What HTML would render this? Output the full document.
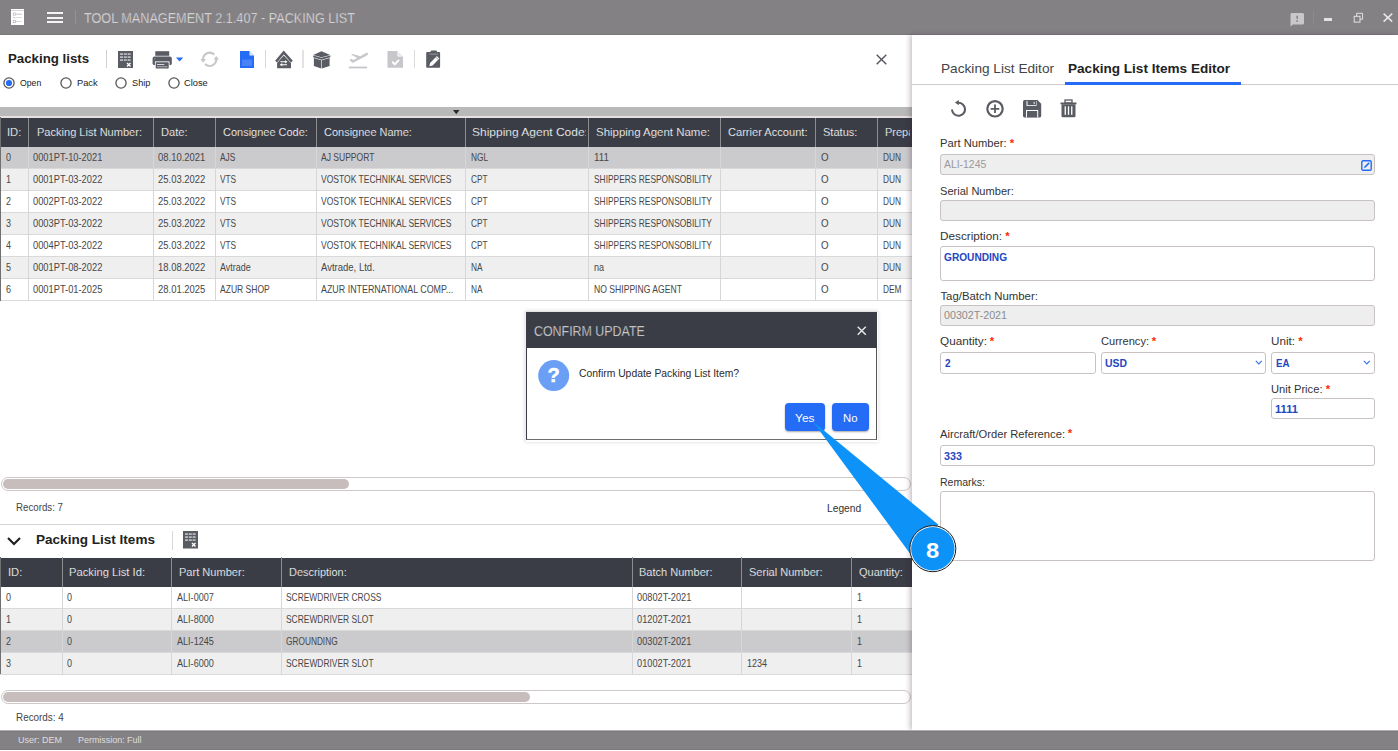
<!DOCTYPE html>
<html><head><meta charset="utf-8">
<style>
*{margin:0;padding:0;box-sizing:border-box}
html,body{width:1398px;height:751px;overflow:hidden;background:#fff;font-family:"Liberation Sans",sans-serif;position:relative}
.a{position:absolute;white-space:nowrap}
svg.a{overflow:visible}
</style></head><body>
<div class="a" style="left:0px;top:0px;width:1398px;height:35px;background:#848185;"></div>
<div class="a" style="left:0px;top:34px;width:1398px;height:1px;background:#7a777b;"></div>
<svg class="a" style="left:11px;top:9px" width="14" height="17" viewBox="0 0 14 17"><rect x="0" y="0" width="13" height="16" fill="#fff"/><rect x="0" y="1.2" width="13" height="0.8" fill="#cfcfcf"/><rect x="2.2" y="4" width="2.2" height="2.2" fill="none" stroke="#aaa" stroke-width="0.6"/><rect x="5" y="4.8" width="6" height="0.7" fill="#aaa"/><rect x="2" y="8.3" width="2.5" height="0.8" fill="#bbb"/><rect x="5" y="8.3" width="6" height="0.7" fill="#ccc"/><rect x="2.2" y="11.5" width="2.2" height="2.2" fill="none" stroke="#aaa" stroke-width="0.6"/><rect x="5" y="12.3" width="6" height="0.7" fill="#ccc"/></svg>
<div class="a" style="left:47px;top:12px;width:16px;height:2px;background:#f4f4f4;"></div>
<div class="a" style="left:47px;top:16.5px;width:16px;height:2px;background:#f4f4f4;"></div>
<div class="a" style="left:47px;top:21px;width:16px;height:2px;background:#f4f4f4;"></div>
<div class="a" style="left:75px;top:10px;width:1px;height:14px;background:#959296;"></div>
<div class="a" style="left:84.00px;top:11.15px;font-size:14.2px;line-height:15.861px;color:#f2f2f2;transform:scaleX(0.8920);transform-origin:0 0;-webkit-text-stroke:0.45px #848185">TOOL MANAGEMENT 2.1.407 - PACKING LIST</div>
<svg class="a" style="left:1290px;top:13px" width="15" height="14" viewBox="0 0 15 14"><path d="M1.5 0 H12.5 Q14 0 14 1.5 V10 Q14 11.5 12.5 11.5 H3 L0.5 13.5 V1.5 Q0.5 0 1.5 0Z" fill="#c9c7ca"/><rect x="6.4" y="2.8" width="1.5" height="3" fill="#848185"/><rect x="6.4" y="7.2" width="1.5" height="1.6" fill="#848185"/></svg>
<div class="a" style="left:1313px;top:11px;width:1px;height:12px;background:#8f8c90;"></div>
<div class="a" style="left:1324px;top:18.2px;width:8px;height:2.6px;background:#e2e2e2;"></div>
<svg class="a" style="left:1353px;top:12px" width="11" height="11" viewBox="0 0 11 11"><rect x="1.2" y="4.3" width="5.8" height="5.8" fill="none" stroke="#e2e2e2" stroke-width="1"/><path d="M3.6 4.3 V1.3 H9.6 V7.2 H7" fill="none" stroke="#e2e2e2" stroke-width="1"/></svg>
<svg class="a" style="left:1383px;top:13px" width="10" height="9" viewBox="0 0 10 9"><path d="M0.6 0.6 L9.2 8.6 M9.2 0.6 L0.6 8.6" stroke="#e6e6e6" stroke-width="1.5"/></svg>
<div class="a" style="left:7.50px;top:52.05px;font-size:13.2px;line-height:14.744px;color:#222;font-weight:bold;transform:scaleX(1.0052);transform-origin:0 0;">Packing lists</div>
<div class="a" style="left:106px;top:50px;width:1px;height:18px;background:#d0d0d0;"></div>
<svg class="a" style="left:118px;top:51px" width="15" height="17" viewBox="0 0 15 17"><rect width="15" height="17" fill="#5a5c63"/><rect x="2.0" y="2.3" width="3" height="1.6" fill="#c3c4c9"/><rect x="2.0" y="5.3" width="3" height="1.6" fill="#c3c4c9"/><rect x="2.0" y="8.3" width="3" height="1.6" fill="#c3c4c9"/><rect x="5.8" y="2.3" width="3" height="1.6" fill="#c3c4c9"/><rect x="5.8" y="5.3" width="3" height="1.6" fill="#c3c4c9"/><rect x="5.8" y="8.3" width="3" height="1.6" fill="#c3c4c9"/><rect x="9.6" y="2.3" width="3" height="1.6" fill="#c3c4c9"/><rect x="9.6" y="5.3" width="3" height="1.6" fill="#c3c4c9"/><rect x="9.6" y="8.3" width="3" height="1.6" fill="#c3c4c9"/><path d="M9 12 L12.5 15.5 M12.5 12 L9 15.5" stroke="#fff" stroke-width="1.4"/></svg>
<svg class="a" style="left:152px;top:51px" width="21" height="18" viewBox="0 0 21 18"><rect x="3.3" y="0.2" width="13.9" height="4.6" fill="#5a5c63"/><rect x="0.6" y="5.6" width="19.2" height="8.6" rx="2" fill="#5a5c63"/><rect x="2.9" y="10.4" width="14.6" height="7.3" fill="#fff"/><rect x="3.7" y="11.2" width="13" height="6.2" rx="0.6" fill="#5a5c63"/><rect x="5" y="13.1" width="7.3" height="0.9" fill="#e6e6ea"/><rect x="5" y="15.3" width="10.4" height="0.9" fill="#b9bac0"/><rect x="2.3" y="7.3" width="1.3" height="1" fill="#9a9ba2"/></svg>
<svg class="a" style="left:176px;top:57px" width="8" height="5" viewBox="0 0 8 5"><path d="M0 0.5 H7.2 L3.6 4.5Z" fill="#246bf5"/></svg>
<svg class="a" style="left:200px;top:47px" width="20" height="25" viewBox="0 0 20 25"><path d="M14.37 7.63 A6.6 6.6 0 0 0 3.1 12.6" fill="none" stroke="#c6c6cb" stroke-width="2.1"/><path d="M5.03 16.97 A6.6 6.6 0 0 0 16.3 12" fill="none" stroke="#c6c6cb" stroke-width="2.1"/><path d="M0.4 12 L5.8 12 L3.1 15.7Z" fill="#c6c6cb"/><path d="M13.6 12.6 L19 12.6 L16.3 8.9Z" fill="#c6c6cb"/></svg>
<svg class="a" style="left:240px;top:51px" width="14" height="17" viewBox="0 0 14 17"><path d="M0 0 H9.5 L14 4.5 V17 H0Z" fill="#246bf5"/><path d="M9.5 0 V4.5 H14Z" fill="#fff" opacity="0.85"/><rect x="2" y="8.5" width="10" height="6.5" fill="#4a82f7"/></svg>
<div class="a" style="left:265px;top:50px;width:1px;height:18px;background:#d8d8d8;"></div>
<svg class="a" style="left:275px;top:50px" width="18" height="19" viewBox="0 0 18 19"><path d="M1.1 11.6 L8.7 2.4 L16.9 11.6" fill="none" stroke="#5a5c63" stroke-width="2.5" stroke-linejoin="miter"/><path d="M2.1 18.3 V12.9 L8.7 5.5 L16 12.9 V18.3Z" fill="#5a5c63"/><path d="M5.4 11.8 H11.2 M5.4 14.7 H12" stroke="#fff" stroke-width="1.1" fill="none"/><path d="M10.2 10.2 L12.4 11.8 L10.2 13.4Z M7.2 13.1 L5 14.7 L7.2 16.3Z" fill="#fff"/></svg>
<div class="a" style="left:302px;top:50px;width:1.5px;height:18px;background:#e2e2e2;"></div>
<svg class="a" style="left:313px;top:51px" width="18" height="18" viewBox="0 0 18 18"><path d="M0.2 4 L8.5 0.2 L17.3 4 L8.5 6.2Z" fill="#5a5c63"/><path d="M0.2 4.6 L8.5 6.8 L17.3 4.6 L17.3 6.3 L8.5 8.7 L0.2 6.3Z" fill="#5a5c63"/><path d="M0.9 7 L8.2 9.3 V17.4 L0.9 15Z M16.6 7 L8.8 9.3 V17.4 L16.6 15Z" fill="#5a5c63"/></svg>
<svg class="a" style="left:348px;top:51px" width="21" height="18" viewBox="0 0 21 18"><path d="M1.3 8.8 L3.2 7.9 L5.5 9 L9.3 7.1 L3 3.6 L4.8 3 L12.3 5.3 L17 2.6 Q19.8 1.1 20.3 2.2 Q20.6 3.4 18 4.9 L5.5 11.6 Q4.8 11.9 4.2 11.5 Z" fill="#c6c6cb"/><rect x="0.8" y="15.6" width="18.3" height="1.8" fill="#c6c6cb"/></svg>
<svg class="a" style="left:387px;top:51px" width="16" height="17" viewBox="0 0 16 17"><path d="M0.5 0 H10.5 L16 5.5 V16.8 H0.5Z" fill="#c6c6cb"/><path d="M10.8 0.6 V5.2 H15.4Z" fill="#e6e6ea" stroke="#fff" stroke-width="0.7"/><path d="M5.2 10.8 L7.8 13.3 L12 8.8" stroke="#fff" stroke-width="1.9" fill="none"/></svg>
<div class="a" style="left:414px;top:50px;width:1.2px;height:18px;background:#dcdcdc;"></div>
<svg class="a" style="left:426px;top:50px" width="15" height="19" viewBox="0 0 15 19"><rect x="0.2" y="2" width="13.9" height="15.8" rx="1" fill="#5a5c63"/><rect x="4.5" y="0.6" width="6.5" height="3.2" rx="1.3" fill="#5a5c63"/><rect x="3.6" y="3.7" width="8.3" height="0.8" fill="#a9aab0"/><path d="M3.3 16.3 L4.1 12.9 L10.9 6.1 L13.4 8.6 L6.6 15.4Z" fill="#fff"/><path d="M9.8 7.2 L12.3 9.7" stroke="#5a5c63" stroke-width="0.6"/></svg>
<svg class="a" style="left:876px;top:54.2px" width="11" height="11" viewBox="0 0 11 11"><path d="M0.7 0.7 L10.3 10.3 M10.3 0.7 L0.7 10.3" stroke="#52555b" stroke-width="1.4"/></svg>
<svg class="a" style="left:3.3000000000000007px;top:77px" width="12" height="12" viewBox="0 0 12 12"><circle cx="6" cy="6" r="5.1" fill="#fff" stroke="#555" stroke-width="1.3"/><circle cx="6" cy="6" r="3.1" fill="#246bf5"/></svg>
<div class="a" style="left:19.70px;top:77.81px;font-size:9.6px;line-height:10.723px;color:#222;transform:scaleX(0.9082);transform-origin:0 0;">Open</div>
<svg class="a" style="left:60px;top:77px" width="12" height="12" viewBox="0 0 12 12"><circle cx="6" cy="6" r="5.1" fill="#fff" stroke="#555" stroke-width="1.3"/></svg>
<div class="a" style="left:76.80px;top:77.81px;font-size:9.6px;line-height:10.723px;color:#222;transform:scaleX(0.9659);transform-origin:0 0;">Pack</div>
<svg class="a" style="left:115.3px;top:77px" width="12" height="12" viewBox="0 0 12 12"><circle cx="6" cy="6" r="5.1" fill="#fff" stroke="#555" stroke-width="1.3"/></svg>
<div class="a" style="left:131.60px;top:77.81px;font-size:9.6px;line-height:10.723px;color:#222;transform:scaleX(0.9590);transform-origin:0 0;">Ship</div>
<svg class="a" style="left:168px;top:77px" width="12" height="12" viewBox="0 0 12 12"><circle cx="6" cy="6" r="5.1" fill="#fff" stroke="#555" stroke-width="1.3"/></svg>
<div class="a" style="left:184.30px;top:77.81px;font-size:9.6px;line-height:10.723px;color:#222;transform:scaleX(0.9673);transform-origin:0 0;">Close</div>
<div class="a" style="left:0px;top:107px;width:912px;height:9px;background:#b9b9b9;"></div>
<div class="a" style="left:0px;top:116px;width:912px;height:2px;background:#e6e0e0;"></div>
<svg class="a" style="left:453px;top:110px" width="7" height="5" viewBox="0 0 7 5"><path d="M0 0 H6.5 L3.25 4.3Z" fill="#2b2b2b"/></svg>
<div class="a" style="left:0px;top:118px;width:912px;height:29px;background:#3a3d46;"></div>
<div class="a" style="left:0px;top:147.0px;width:912px;height:21.88px;background:#cbcacd;"></div>
<div class="a" style="left:0px;top:168.88px;width:912px;height:21.88px;background:#efefef;"></div>
<div class="a" style="left:0px;top:190.76px;width:912px;height:21.88px;background:#fff;"></div>
<div class="a" style="left:0px;top:212.64px;width:912px;height:21.88px;background:#efefef;"></div>
<div class="a" style="left:0px;top:234.51999999999998px;width:912px;height:21.88px;background:#fff;"></div>
<div class="a" style="left:0px;top:256.4px;width:912px;height:21.88px;background:#efefef;"></div>
<div class="a" style="left:0px;top:278.28px;width:912px;height:21.88px;background:#fff;"></div>
<div class="a" style="left:0px;top:168.38px;width:912px;height:1px;background:#d9d9d9;"></div>
<div class="a" style="left:0px;top:190.26px;width:912px;height:1px;background:#d9d9d9;"></div>
<div class="a" style="left:0px;top:212.14px;width:912px;height:1px;background:#d9d9d9;"></div>
<div class="a" style="left:0px;top:234.01999999999998px;width:912px;height:1px;background:#d9d9d9;"></div>
<div class="a" style="left:0px;top:255.89999999999998px;width:912px;height:1px;background:#d9d9d9;"></div>
<div class="a" style="left:0px;top:277.78px;width:912px;height:1px;background:#d9d9d9;"></div>
<div class="a" style="left:0px;top:299.65999999999997px;width:912px;height:1px;background:#d9d9d9;"></div>
<div class="a" style="left:28.0px;top:118px;width:1.2px;height:29px;background:#8e8e92;"></div>
<div class="a" style="left:28.0px;top:147px;width:1px;height:153.16px;background:#d6d6d6;"></div>
<div class="a" style="left:152.5px;top:118px;width:1.2px;height:29px;background:#8e8e92;"></div>
<div class="a" style="left:152.5px;top:147px;width:1px;height:153.16px;background:#d6d6d6;"></div>
<div class="a" style="left:215.0px;top:118px;width:1.2px;height:29px;background:#8e8e92;"></div>
<div class="a" style="left:215.0px;top:147px;width:1px;height:153.16px;background:#d6d6d6;"></div>
<div class="a" style="left:316.0px;top:118px;width:1.2px;height:29px;background:#8e8e92;"></div>
<div class="a" style="left:316.0px;top:147px;width:1px;height:153.16px;background:#d6d6d6;"></div>
<div class="a" style="left:464.8px;top:118px;width:1.2px;height:29px;background:#8e8e92;"></div>
<div class="a" style="left:464.8px;top:147px;width:1px;height:153.16px;background:#d6d6d6;"></div>
<div class="a" style="left:587.9px;top:118px;width:1.2px;height:29px;background:#8e8e92;"></div>
<div class="a" style="left:587.9px;top:147px;width:1px;height:153.16px;background:#d6d6d6;"></div>
<div class="a" style="left:720.0px;top:118px;width:1.2px;height:29px;background:#8e8e92;"></div>
<div class="a" style="left:720.0px;top:147px;width:1px;height:153.16px;background:#d6d6d6;"></div>
<div class="a" style="left:814.7px;top:118px;width:1.2px;height:29px;background:#8e8e92;"></div>
<div class="a" style="left:814.7px;top:147px;width:1px;height:153.16px;background:#d6d6d6;"></div>
<div class="a" style="left:877.3px;top:118px;width:1.2px;height:29px;background:#8e8e92;"></div>
<div class="a" style="left:877.3px;top:147px;width:1px;height:153.16px;background:#d6d6d6;"></div>
<div class="a" style="left:0px;top:117px;width:1px;height:184px;background:#707070;"></div>
<div class="a" style="left:0;top:0;width:26.5px;height:751px;overflow:hidden"><div class="a" style="left:7.00px;top:125.70px;font-size:11.6px;line-height:12.957px;color:#f4f4f4;transform:scaleX(0.9656);transform-origin:0 0;-webkit-text-stroke:0.15px #3a3d46">ID:</div></div>
<div class="a" style="left:0;top:0;width:151px;height:751px;overflow:hidden"><div class="a" style="left:36.60px;top:125.70px;font-size:11.6px;line-height:12.957px;color:#f4f4f4;transform:scaleX(0.9529);transform-origin:0 0;-webkit-text-stroke:0.15px #3a3d46">Packing List Number:</div></div>
<div class="a" style="left:0;top:0;width:213.5px;height:751px;overflow:hidden"><div class="a" style="left:160.60px;top:125.70px;font-size:11.6px;line-height:12.957px;color:#f4f4f4;transform:scaleX(0.9579);transform-origin:0 0;-webkit-text-stroke:0.15px #3a3d46">Date:</div></div>
<div class="a" style="left:0;top:0;width:314.5px;height:751px;overflow:hidden"><div class="a" style="left:222.80px;top:125.70px;font-size:11.6px;line-height:12.957px;color:#f4f4f4;transform:scaleX(0.9474);transform-origin:0 0;-webkit-text-stroke:0.15px #3a3d46">Consignee Code:</div></div>
<div class="a" style="left:0;top:0;width:463.3px;height:751px;overflow:hidden"><div class="a" style="left:323.50px;top:125.70px;font-size:11.6px;line-height:12.957px;color:#f4f4f4;transform:scaleX(0.9468);transform-origin:0 0;-webkit-text-stroke:0.15px #3a3d46">Consignee Name:</div></div>
<div class="a" style="left:0;top:0;width:586.4px;height:751px;overflow:hidden"><div class="a" style="left:472.40px;top:125.70px;font-size:11.6px;line-height:12.957px;color:#f4f4f4;transform:scaleX(1.0337);transform-origin:0 0;-webkit-text-stroke:0.15px #3a3d46">Shipping Agent Code:</div></div>
<div class="a" style="left:0;top:0;width:718.5px;height:751px;overflow:hidden"><div class="a" style="left:596.40px;top:125.70px;font-size:11.6px;line-height:12.957px;color:#f4f4f4;transform:scaleX(0.9877);transform-origin:0 0;-webkit-text-stroke:0.15px #3a3d46">Shipping Agent Name:</div></div>
<div class="a" style="left:0;top:0;width:813.2px;height:751px;overflow:hidden"><div class="a" style="left:728.00px;top:125.70px;font-size:11.6px;line-height:12.957px;color:#f4f4f4;transform:scaleX(0.9565);transform-origin:0 0;-webkit-text-stroke:0.15px #3a3d46">Carrier Account:</div></div>
<div class="a" style="left:0;top:0;width:875.8px;height:751px;overflow:hidden"><div class="a" style="left:822.80px;top:125.70px;font-size:11.6px;line-height:12.957px;color:#f4f4f4;transform:scaleX(0.9529);transform-origin:0 0;-webkit-text-stroke:0.15px #3a3d46">Status:</div></div>
<div class="a" style="left:0;top:0;width:910px;height:751px;overflow:hidden"><div class="a" style="left:885.00px;top:125.70px;font-size:11.6px;line-height:12.957px;color:#f4f4f4;transform:scaleX(0.9471);transform-origin:0 0;-webkit-text-stroke:0.15px #3a3d46">Preparer:</div></div>
<div class="a" style="left:0;top:0;width:27.5px;height:751px;overflow:hidden"><div class="a" style="left:5.60px;top:152.39px;font-size:10.4px;line-height:11.617px;color:#474747;transform:scaleX(0.8634);transform-origin:0 0;">0</div></div>
<div class="a" style="left:0;top:0;width:152px;height:751px;overflow:hidden"><div class="a" style="left:33.30px;top:152.39px;font-size:10.4px;line-height:11.617px;color:#474747;transform:scaleX(0.8954);transform-origin:0 0;">0001PT-10-2021</div></div>
<div class="a" style="left:0;top:0;width:214.5px;height:751px;overflow:hidden"><div class="a" style="left:158.30px;top:152.39px;font-size:10.4px;line-height:11.617px;color:#474747;transform:scaleX(0.9087);transform-origin:0 0;">08.10.2021</div></div>
<div class="a" style="left:0;top:0;width:315.5px;height:751px;overflow:hidden"><div class="a" style="left:220.30px;top:152.39px;font-size:10.4px;line-height:11.617px;color:#474747;transform:scaleX(0.7973);transform-origin:0 0;">AJS</div></div>
<div class="a" style="left:0;top:0;width:464.3px;height:751px;overflow:hidden"><div class="a" style="left:321.30px;top:152.39px;font-size:10.4px;line-height:11.617px;color:#474747;transform:scaleX(0.8212);transform-origin:0 0;">AJ SUPPORT</div></div>
<div class="a" style="left:0;top:0;width:587.4px;height:751px;overflow:hidden"><div class="a" style="left:470.70px;top:152.39px;font-size:10.4px;line-height:11.617px;color:#474747;transform:scaleX(0.7985);transform-origin:0 0;">NGL</div></div>
<div class="a" style="left:0;top:0;width:719.5px;height:751px;overflow:hidden"><div class="a" style="left:594.10px;top:152.39px;font-size:10.4px;line-height:11.617px;color:#474747;transform:scaleX(0.9470);transform-origin:0 0;">111</div></div>
<div class="a" style="left:0;top:0;width:876.8px;height:751px;overflow:hidden"><div class="a" style="left:821.10px;top:152.39px;font-size:10.4px;line-height:11.617px;color:#474747;transform:scaleX(0.9408);transform-origin:0 0;">O</div></div>
<div class="a" style="left:0;top:0;width:911px;height:751px;overflow:hidden"><div class="a" style="left:883.00px;top:152.39px;font-size:10.4px;line-height:11.617px;color:#474747;transform:scaleX(0.7987);transform-origin:0 0;">DUN</div></div>
<div class="a" style="left:0;top:0;width:27.5px;height:751px;overflow:hidden"><div class="a" style="left:5.60px;top:174.34px;font-size:10.4px;line-height:11.617px;color:#474747;transform:scaleX(0.8634);transform-origin:0 0;">1</div></div>
<div class="a" style="left:0;top:0;width:152px;height:751px;overflow:hidden"><div class="a" style="left:33.30px;top:174.34px;font-size:10.4px;line-height:11.617px;color:#474747;transform:scaleX(0.8954);transform-origin:0 0;">0001PT-03-2022</div></div>
<div class="a" style="left:0;top:0;width:214.5px;height:751px;overflow:hidden"><div class="a" style="left:158.30px;top:174.34px;font-size:10.4px;line-height:11.617px;color:#474747;transform:scaleX(0.9087);transform-origin:0 0;">25.03.2022</div></div>
<div class="a" style="left:0;top:0;width:315.5px;height:751px;overflow:hidden"><div class="a" style="left:220.30px;top:174.34px;font-size:10.4px;line-height:11.617px;color:#474747;transform:scaleX(0.7976);transform-origin:0 0;">VTS</div></div>
<div class="a" style="left:0;top:0;width:464.3px;height:751px;overflow:hidden"><div class="a" style="left:321.30px;top:174.34px;font-size:10.4px;line-height:11.617px;color:#474747;transform:scaleX(0.8199);transform-origin:0 0;">VOSTOK TECHNIKAL SERVICES</div></div>
<div class="a" style="left:0;top:0;width:587.4px;height:751px;overflow:hidden"><div class="a" style="left:470.70px;top:174.34px;font-size:10.4px;line-height:11.617px;color:#474747;transform:scaleX(0.7981);transform-origin:0 0;">CPT</div></div>
<div class="a" style="left:0;top:0;width:719.5px;height:751px;overflow:hidden"><div class="a" style="left:594.10px;top:174.34px;font-size:10.4px;line-height:11.617px;color:#474747;transform:scaleX(0.8072);transform-origin:0 0;">SHIPPERS RESPONSOBILITY</div></div>
<div class="a" style="left:0;top:0;width:876.8px;height:751px;overflow:hidden"><div class="a" style="left:821.10px;top:174.34px;font-size:10.4px;line-height:11.617px;color:#474747;transform:scaleX(0.9408);transform-origin:0 0;">O</div></div>
<div class="a" style="left:0;top:0;width:911px;height:751px;overflow:hidden"><div class="a" style="left:883.00px;top:174.34px;font-size:10.4px;line-height:11.617px;color:#474747;transform:scaleX(0.7987);transform-origin:0 0;">DUN</div></div>
<div class="a" style="left:0;top:0;width:27.5px;height:751px;overflow:hidden"><div class="a" style="left:5.60px;top:196.29px;font-size:10.4px;line-height:11.617px;color:#474747;transform:scaleX(0.8634);transform-origin:0 0;">2</div></div>
<div class="a" style="left:0;top:0;width:152px;height:751px;overflow:hidden"><div class="a" style="left:33.30px;top:196.29px;font-size:10.4px;line-height:11.617px;color:#474747;transform:scaleX(0.8954);transform-origin:0 0;">0002PT-03-2022</div></div>
<div class="a" style="left:0;top:0;width:214.5px;height:751px;overflow:hidden"><div class="a" style="left:158.30px;top:196.29px;font-size:10.4px;line-height:11.617px;color:#474747;transform:scaleX(0.9087);transform-origin:0 0;">25.03.2022</div></div>
<div class="a" style="left:0;top:0;width:315.5px;height:751px;overflow:hidden"><div class="a" style="left:220.30px;top:196.29px;font-size:10.4px;line-height:11.617px;color:#474747;transform:scaleX(0.7976);transform-origin:0 0;">VTS</div></div>
<div class="a" style="left:0;top:0;width:464.3px;height:751px;overflow:hidden"><div class="a" style="left:321.30px;top:196.29px;font-size:10.4px;line-height:11.617px;color:#474747;transform:scaleX(0.8199);transform-origin:0 0;">VOSTOK TECHNIKAL SERVICES</div></div>
<div class="a" style="left:0;top:0;width:587.4px;height:751px;overflow:hidden"><div class="a" style="left:470.70px;top:196.29px;font-size:10.4px;line-height:11.617px;color:#474747;transform:scaleX(0.7981);transform-origin:0 0;">CPT</div></div>
<div class="a" style="left:0;top:0;width:719.5px;height:751px;overflow:hidden"><div class="a" style="left:594.10px;top:196.29px;font-size:10.4px;line-height:11.617px;color:#474747;transform:scaleX(0.8072);transform-origin:0 0;">SHIPPERS RESPONSOBILITY</div></div>
<div class="a" style="left:0;top:0;width:876.8px;height:751px;overflow:hidden"><div class="a" style="left:821.10px;top:196.29px;font-size:10.4px;line-height:11.617px;color:#474747;transform:scaleX(0.9408);transform-origin:0 0;">O</div></div>
<div class="a" style="left:0;top:0;width:911px;height:751px;overflow:hidden"><div class="a" style="left:883.00px;top:196.29px;font-size:10.4px;line-height:11.617px;color:#474747;transform:scaleX(0.7987);transform-origin:0 0;">DUN</div></div>
<div class="a" style="left:0;top:0;width:27.5px;height:751px;overflow:hidden"><div class="a" style="left:5.60px;top:218.24px;font-size:10.4px;line-height:11.617px;color:#474747;transform:scaleX(0.8634);transform-origin:0 0;">3</div></div>
<div class="a" style="left:0;top:0;width:152px;height:751px;overflow:hidden"><div class="a" style="left:33.30px;top:218.24px;font-size:10.4px;line-height:11.617px;color:#474747;transform:scaleX(0.8954);transform-origin:0 0;">0003PT-03-2022</div></div>
<div class="a" style="left:0;top:0;width:214.5px;height:751px;overflow:hidden"><div class="a" style="left:158.30px;top:218.24px;font-size:10.4px;line-height:11.617px;color:#474747;transform:scaleX(0.9087);transform-origin:0 0;">25.03.2022</div></div>
<div class="a" style="left:0;top:0;width:315.5px;height:751px;overflow:hidden"><div class="a" style="left:220.30px;top:218.24px;font-size:10.4px;line-height:11.617px;color:#474747;transform:scaleX(0.7976);transform-origin:0 0;">VTS</div></div>
<div class="a" style="left:0;top:0;width:464.3px;height:751px;overflow:hidden"><div class="a" style="left:321.30px;top:218.24px;font-size:10.4px;line-height:11.617px;color:#474747;transform:scaleX(0.8199);transform-origin:0 0;">VOSTOK TECHNIKAL SERVICES</div></div>
<div class="a" style="left:0;top:0;width:587.4px;height:751px;overflow:hidden"><div class="a" style="left:470.70px;top:218.24px;font-size:10.4px;line-height:11.617px;color:#474747;transform:scaleX(0.7981);transform-origin:0 0;">CPT</div></div>
<div class="a" style="left:0;top:0;width:719.5px;height:751px;overflow:hidden"><div class="a" style="left:594.10px;top:218.24px;font-size:10.4px;line-height:11.617px;color:#474747;transform:scaleX(0.8072);transform-origin:0 0;">SHIPPERS RESPONSOBILITY</div></div>
<div class="a" style="left:0;top:0;width:876.8px;height:751px;overflow:hidden"><div class="a" style="left:821.10px;top:218.24px;font-size:10.4px;line-height:11.617px;color:#474747;transform:scaleX(0.9408);transform-origin:0 0;">O</div></div>
<div class="a" style="left:0;top:0;width:911px;height:751px;overflow:hidden"><div class="a" style="left:883.00px;top:218.24px;font-size:10.4px;line-height:11.617px;color:#474747;transform:scaleX(0.7987);transform-origin:0 0;">DUN</div></div>
<div class="a" style="left:0;top:0;width:27.5px;height:751px;overflow:hidden"><div class="a" style="left:5.60px;top:240.19px;font-size:10.4px;line-height:11.617px;color:#474747;transform:scaleX(0.8634);transform-origin:0 0;">4</div></div>
<div class="a" style="left:0;top:0;width:152px;height:751px;overflow:hidden"><div class="a" style="left:33.30px;top:240.19px;font-size:10.4px;line-height:11.617px;color:#474747;transform:scaleX(0.8954);transform-origin:0 0;">0004PT-03-2022</div></div>
<div class="a" style="left:0;top:0;width:214.5px;height:751px;overflow:hidden"><div class="a" style="left:158.30px;top:240.19px;font-size:10.4px;line-height:11.617px;color:#474747;transform:scaleX(0.9087);transform-origin:0 0;">25.03.2022</div></div>
<div class="a" style="left:0;top:0;width:315.5px;height:751px;overflow:hidden"><div class="a" style="left:220.30px;top:240.19px;font-size:10.4px;line-height:11.617px;color:#474747;transform:scaleX(0.7976);transform-origin:0 0;">VTS</div></div>
<div class="a" style="left:0;top:0;width:464.3px;height:751px;overflow:hidden"><div class="a" style="left:321.30px;top:240.19px;font-size:10.4px;line-height:11.617px;color:#474747;transform:scaleX(0.8199);transform-origin:0 0;">VOSTOK TECHNIKAL SERVICES</div></div>
<div class="a" style="left:0;top:0;width:587.4px;height:751px;overflow:hidden"><div class="a" style="left:470.70px;top:240.19px;font-size:10.4px;line-height:11.617px;color:#474747;transform:scaleX(0.7981);transform-origin:0 0;">CPT</div></div>
<div class="a" style="left:0;top:0;width:719.5px;height:751px;overflow:hidden"><div class="a" style="left:594.10px;top:240.19px;font-size:10.4px;line-height:11.617px;color:#474747;transform:scaleX(0.8072);transform-origin:0 0;">SHIPPERS RESPONSOBILITY</div></div>
<div class="a" style="left:0;top:0;width:876.8px;height:751px;overflow:hidden"><div class="a" style="left:821.10px;top:240.19px;font-size:10.4px;line-height:11.617px;color:#474747;transform:scaleX(0.9408);transform-origin:0 0;">O</div></div>
<div class="a" style="left:0;top:0;width:911px;height:751px;overflow:hidden"><div class="a" style="left:883.00px;top:240.19px;font-size:10.4px;line-height:11.617px;color:#474747;transform:scaleX(0.7987);transform-origin:0 0;">DUN</div></div>
<div class="a" style="left:0;top:0;width:27.5px;height:751px;overflow:hidden"><div class="a" style="left:5.60px;top:262.14px;font-size:10.4px;line-height:11.617px;color:#474747;transform:scaleX(0.8634);transform-origin:0 0;">5</div></div>
<div class="a" style="left:0;top:0;width:152px;height:751px;overflow:hidden"><div class="a" style="left:33.30px;top:262.14px;font-size:10.4px;line-height:11.617px;color:#474747;transform:scaleX(0.8954);transform-origin:0 0;">0001PT-08-2022</div></div>
<div class="a" style="left:0;top:0;width:214.5px;height:751px;overflow:hidden"><div class="a" style="left:158.30px;top:262.14px;font-size:10.4px;line-height:11.617px;color:#474747;transform:scaleX(0.9087);transform-origin:0 0;">18.08.2022</div></div>
<div class="a" style="left:0;top:0;width:315.5px;height:751px;overflow:hidden"><div class="a" style="left:220.30px;top:262.14px;font-size:10.4px;line-height:11.617px;color:#474747;transform:scaleX(0.8595);transform-origin:0 0;">Avtrade</div></div>
<div class="a" style="left:0;top:0;width:464.3px;height:751px;overflow:hidden"><div class="a" style="left:321.30px;top:262.14px;font-size:10.4px;line-height:11.617px;color:#474747;transform:scaleX(0.9157);transform-origin:0 0;">Avtrade, Ltd.</div></div>
<div class="a" style="left:0;top:0;width:587.4px;height:751px;overflow:hidden"><div class="a" style="left:470.70px;top:262.14px;font-size:10.4px;line-height:11.617px;color:#474747;transform:scaleX(0.7981);transform-origin:0 0;">NA</div></div>
<div class="a" style="left:0;top:0;width:719.5px;height:751px;overflow:hidden"><div class="a" style="left:594.10px;top:262.14px;font-size:10.4px;line-height:11.617px;color:#474747;transform:scaleX(0.8692);transform-origin:0 0;">na</div></div>
<div class="a" style="left:0;top:0;width:876.8px;height:751px;overflow:hidden"><div class="a" style="left:821.10px;top:262.14px;font-size:10.4px;line-height:11.617px;color:#474747;transform:scaleX(0.9408);transform-origin:0 0;">O</div></div>
<div class="a" style="left:0;top:0;width:911px;height:751px;overflow:hidden"><div class="a" style="left:883.00px;top:262.14px;font-size:10.4px;line-height:11.617px;color:#474747;transform:scaleX(0.7987);transform-origin:0 0;">DUN</div></div>
<div class="a" style="left:0;top:0;width:27.5px;height:751px;overflow:hidden"><div class="a" style="left:5.60px;top:284.09px;font-size:10.4px;line-height:11.617px;color:#474747;transform:scaleX(0.8634);transform-origin:0 0;">6</div></div>
<div class="a" style="left:0;top:0;width:152px;height:751px;overflow:hidden"><div class="a" style="left:33.30px;top:284.09px;font-size:10.4px;line-height:11.617px;color:#474747;transform:scaleX(0.8954);transform-origin:0 0;">0001PT-01-2025</div></div>
<div class="a" style="left:0;top:0;width:214.5px;height:751px;overflow:hidden"><div class="a" style="left:158.30px;top:284.09px;font-size:10.4px;line-height:11.617px;color:#474747;transform:scaleX(0.9087);transform-origin:0 0;">28.01.2025</div></div>
<div class="a" style="left:0;top:0;width:315.5px;height:751px;overflow:hidden"><div class="a" style="left:220.30px;top:284.09px;font-size:10.4px;line-height:11.617px;color:#474747;transform:scaleX(0.8207);transform-origin:0 0;">AZUR SHOP</div></div>
<div class="a" style="left:0;top:0;width:464.3px;height:751px;overflow:hidden"><div class="a" style="left:321.30px;top:284.09px;font-size:10.4px;line-height:11.617px;color:#474747;transform:scaleX(0.8553);transform-origin:0 0;">AZUR INTERNATIONAL COMP...</div></div>
<div class="a" style="left:0;top:0;width:587.4px;height:751px;overflow:hidden"><div class="a" style="left:470.70px;top:284.09px;font-size:10.4px;line-height:11.617px;color:#474747;transform:scaleX(0.7981);transform-origin:0 0;">NA</div></div>
<div class="a" style="left:0;top:0;width:719.5px;height:751px;overflow:hidden"><div class="a" style="left:594.10px;top:284.09px;font-size:10.4px;line-height:11.617px;color:#474747;transform:scaleX(0.8281);transform-origin:0 0;">NO SHIPPING AGENT</div></div>
<div class="a" style="left:0;top:0;width:876.8px;height:751px;overflow:hidden"><div class="a" style="left:821.10px;top:284.09px;font-size:10.4px;line-height:11.617px;color:#474747;transform:scaleX(0.9408);transform-origin:0 0;">O</div></div>
<div class="a" style="left:0;top:0;width:911px;height:751px;overflow:hidden"><div class="a" style="left:883.00px;top:284.09px;font-size:10.4px;line-height:11.617px;color:#474747;transform:scaleX(0.7980);transform-origin:0 0;">DEM</div></div>
<div class="a" style="left:1px;top:477px;width:910px;height:14px;border:1px solid #cfc8c8;border-radius:7px;background:#fff"></div>
<div class="a" style="left:3px;top:479px;width:346px;height:10px;border-radius:5px;background:#c7bdbd"></div>
<div class="a" style="left:16.00px;top:501.98px;font-size:10.3px;line-height:11.505px;color:#444;transform:scaleX(0.9432);transform-origin:0 0;">Records: 7</div>
<div class="a" style="left:826.70px;top:502.68px;font-size:10.3px;line-height:11.505px;color:#333;transform:scaleX(0.9940);transform-origin:0 0;">Legend</div>
<div class="a" style="left:0px;top:524px;width:912px;height:1px;background:#d8d2d2;"></div>
<svg class="a" style="left:7px;top:537px" width="14" height="9" viewBox="0 0 14 9"><path d="M1 1 L7 7 L13 1" fill="none" stroke="#222" stroke-width="2.2"/></svg>
<div class="a" style="left:35.50px;top:532.84px;font-size:13px;line-height:14.521px;color:#222;font-weight:bold;transform:scaleX(1.0424);transform-origin:0 0;">Packing List Items</div>
<div class="a" style="left:172px;top:531px;width:1px;height:19px;background:#d8d8d8;"></div>
<svg class="a" style="left:183px;top:531px" width="15" height="17" viewBox="0 0 15 17"><rect width="15" height="17.5" fill="#5a5c63"/><rect x="2.0" y="2.3" width="3" height="1.6" fill="#c3c4c9"/><rect x="2.0" y="5.3" width="3" height="1.6" fill="#c3c4c9"/><rect x="2.0" y="8.3" width="3" height="1.6" fill="#c3c4c9"/><rect x="5.8" y="2.3" width="3" height="1.6" fill="#c3c4c9"/><rect x="5.8" y="5.3" width="3" height="1.6" fill="#c3c4c9"/><rect x="5.8" y="8.3" width="3" height="1.6" fill="#c3c4c9"/><rect x="9.6" y="2.3" width="3" height="1.6" fill="#c3c4c9"/><rect x="9.6" y="5.3" width="3" height="1.6" fill="#c3c4c9"/><rect x="9.6" y="8.3" width="3" height="1.6" fill="#c3c4c9"/><path d="M9 12 L12.5 15.5 M12.5 12 L9 15.5" stroke="#fff" stroke-width="1.4"/></svg>
<div class="a" style="left:0px;top:557.5px;width:912px;height:29.5px;background:#3a3d46;"></div>
<div class="a" style="left:0px;top:587.0px;width:912px;height:21.85px;background:#fff;"></div>
<div class="a" style="left:0px;top:608.85px;width:912px;height:21.85px;background:#efefef;"></div>
<div class="a" style="left:0px;top:630.7px;width:912px;height:21.85px;background:#cbcacd;"></div>
<div class="a" style="left:0px;top:652.55px;width:912px;height:21.85px;background:#efefef;"></div>
<div class="a" style="left:0px;top:608.35px;width:912px;height:1px;background:#d9d9d9;"></div>
<div class="a" style="left:0px;top:630.2px;width:912px;height:1px;background:#d9d9d9;"></div>
<div class="a" style="left:0px;top:652.0500000000001px;width:912px;height:1px;background:#d9d9d9;"></div>
<div class="a" style="left:0px;top:673.9px;width:912px;height:1px;background:#d9d9d9;"></div>
<div class="a" style="left:61.5px;top:557px;width:1.2px;height:30px;background:#8e8e92;"></div>
<div class="a" style="left:61.5px;top:587px;width:1px;height:87.4px;background:#d6d6d6;"></div>
<div class="a" style="left:171.2px;top:557px;width:1.2px;height:30px;background:#8e8e92;"></div>
<div class="a" style="left:171.2px;top:587px;width:1px;height:87.4px;background:#d6d6d6;"></div>
<div class="a" style="left:280.9px;top:557px;width:1.2px;height:30px;background:#8e8e92;"></div>
<div class="a" style="left:280.9px;top:587px;width:1px;height:87.4px;background:#d6d6d6;"></div>
<div class="a" style="left:631.7px;top:557px;width:1.2px;height:30px;background:#8e8e92;"></div>
<div class="a" style="left:631.7px;top:587px;width:1px;height:87.4px;background:#d6d6d6;"></div>
<div class="a" style="left:741.0px;top:557px;width:1.2px;height:30px;background:#8e8e92;"></div>
<div class="a" style="left:741.0px;top:587px;width:1px;height:87.4px;background:#d6d6d6;"></div>
<div class="a" style="left:850.7px;top:557px;width:1.2px;height:30px;background:#8e8e92;"></div>
<div class="a" style="left:850.7px;top:587px;width:1px;height:87.4px;background:#d6d6d6;"></div>
<div class="a" style="left:0px;top:557px;width:1px;height:117px;background:#707070;"></div>
<div class="a" style="left:7.80px;top:565.70px;font-size:11.6px;line-height:12.957px;color:#f4f4f4;transform:scaleX(0.9656);transform-origin:0 0;-webkit-text-stroke:0.15px #3a3d46">ID:</div>
<div class="a" style="left:69.00px;top:565.70px;font-size:11.6px;line-height:12.957px;color:#f4f4f4;transform:scaleX(0.9669);transform-origin:0 0;-webkit-text-stroke:0.15px #3a3d46">Packing List Id:</div>
<div class="a" style="left:179.00px;top:565.70px;font-size:11.6px;line-height:12.957px;color:#f4f4f4;transform:scaleX(0.9532);transform-origin:0 0;-webkit-text-stroke:0.15px #3a3d46">Part Number:</div>
<div class="a" style="left:288.80px;top:565.70px;font-size:11.6px;line-height:12.957px;color:#f4f4f4;transform:scaleX(0.9428);transform-origin:0 0;-webkit-text-stroke:0.15px #3a3d46">Description:</div>
<div class="a" style="left:639.00px;top:565.70px;font-size:11.6px;line-height:12.957px;color:#f4f4f4;transform:scaleX(0.9507);transform-origin:0 0;-webkit-text-stroke:0.15px #3a3d46">Batch Number:</div>
<div class="a" style="left:749.20px;top:565.70px;font-size:11.6px;line-height:12.957px;color:#f4f4f4;transform:scaleX(0.9507);transform-origin:0 0;-webkit-text-stroke:0.15px #3a3d46">Serial Number:</div>
<div class="a" style="left:858.90px;top:565.70px;font-size:11.6px;line-height:12.957px;color:#f4f4f4;transform:scaleX(0.9458);transform-origin:0 0;-webkit-text-stroke:0.15px #3a3d46">Quantity:</div>
<div class="a" style="left:5.70px;top:592.39px;font-size:10.4px;line-height:11.617px;color:#474747;transform:scaleX(0.8634);transform-origin:0 0;">0</div>
<div class="a" style="left:67.00px;top:592.39px;font-size:10.4px;line-height:11.617px;color:#474747;transform:scaleX(0.8634);transform-origin:0 0;">0</div>
<div class="a" style="left:176.70px;top:592.39px;font-size:10.4px;line-height:11.617px;color:#474747;transform:scaleX(0.8729);transform-origin:0 0;">ALI-0007</div>
<div class="a" style="left:286.30px;top:592.39px;font-size:10.4px;line-height:11.617px;color:#474747;transform:scaleX(0.8097);transform-origin:0 0;">SCREWDRIVER CROSS</div>
<div class="a" style="left:637.10px;top:592.39px;font-size:10.4px;line-height:11.617px;color:#474747;transform:scaleX(0.8880);transform-origin:0 0;">00802T-2021</div>
<div class="a" style="left:856.50px;top:592.39px;font-size:10.4px;line-height:11.617px;color:#474747;transform:scaleX(0.8634);transform-origin:0 0;">1</div>
<div class="a" style="left:5.70px;top:614.34px;font-size:10.4px;line-height:11.617px;color:#474747;transform:scaleX(0.8634);transform-origin:0 0;">1</div>
<div class="a" style="left:67.00px;top:614.34px;font-size:10.4px;line-height:11.617px;color:#474747;transform:scaleX(0.8634);transform-origin:0 0;">0</div>
<div class="a" style="left:176.70px;top:614.34px;font-size:10.4px;line-height:11.617px;color:#474747;transform:scaleX(0.8729);transform-origin:0 0;">ALI-8000</div>
<div class="a" style="left:286.30px;top:614.34px;font-size:10.4px;line-height:11.617px;color:#474747;transform:scaleX(0.8107);transform-origin:0 0;">SCREWDRIVER SLOT</div>
<div class="a" style="left:637.10px;top:614.34px;font-size:10.4px;line-height:11.617px;color:#474747;transform:scaleX(0.8880);transform-origin:0 0;">01202T-2021</div>
<div class="a" style="left:856.50px;top:614.34px;font-size:10.4px;line-height:11.617px;color:#474747;transform:scaleX(0.8634);transform-origin:0 0;">1</div>
<div class="a" style="left:5.70px;top:636.29px;font-size:10.4px;line-height:11.617px;color:#474747;transform:scaleX(0.8634);transform-origin:0 0;">2</div>
<div class="a" style="left:67.00px;top:636.29px;font-size:10.4px;line-height:11.617px;color:#474747;transform:scaleX(0.8634);transform-origin:0 0;">0</div>
<div class="a" style="left:176.70px;top:636.29px;font-size:10.4px;line-height:11.617px;color:#474747;transform:scaleX(0.8729);transform-origin:0 0;">ALI-1245</div>
<div class="a" style="left:286.30px;top:636.29px;font-size:10.4px;line-height:11.617px;color:#474747;transform:scaleX(0.7985);transform-origin:0 0;">GROUNDING</div>
<div class="a" style="left:637.10px;top:636.29px;font-size:10.4px;line-height:11.617px;color:#474747;transform:scaleX(0.8880);transform-origin:0 0;">00302T-2021</div>
<div class="a" style="left:856.50px;top:636.29px;font-size:10.4px;line-height:11.617px;color:#474747;transform:scaleX(0.8634);transform-origin:0 0;">1</div>
<div class="a" style="left:5.70px;top:658.24px;font-size:10.4px;line-height:11.617px;color:#474747;transform:scaleX(0.8634);transform-origin:0 0;">3</div>
<div class="a" style="left:67.00px;top:658.24px;font-size:10.4px;line-height:11.617px;color:#474747;transform:scaleX(0.8634);transform-origin:0 0;">0</div>
<div class="a" style="left:176.70px;top:658.24px;font-size:10.4px;line-height:11.617px;color:#474747;transform:scaleX(0.8729);transform-origin:0 0;">ALI-6000</div>
<div class="a" style="left:286.30px;top:658.24px;font-size:10.4px;line-height:11.617px;color:#474747;transform:scaleX(0.8107);transform-origin:0 0;">SCREWDRIVER SLOT</div>
<div class="a" style="left:637.10px;top:658.24px;font-size:10.4px;line-height:11.617px;color:#474747;transform:scaleX(0.8880);transform-origin:0 0;">01002T-2021</div>
<div class="a" style="left:746.80px;top:658.24px;font-size:10.4px;line-height:11.617px;color:#474747;transform:scaleX(0.8634);transform-origin:0 0;">1234</div>
<div class="a" style="left:856.50px;top:658.24px;font-size:10.4px;line-height:11.617px;color:#474747;transform:scaleX(0.8634);transform-origin:0 0;">1</div>
<div class="a" style="left:1px;top:690px;width:910px;height:14px;border:1px solid #cfc8c8;border-radius:7px;background:#fff"></div>
<div class="a" style="left:3px;top:692px;width:527px;height:10px;border-radius:5px;background:#c7bdbd"></div>
<div class="a" style="left:16.00px;top:711.98px;font-size:10.3px;line-height:11.505px;color:#444;transform:scaleX(0.9593);transform-origin:0 0;">Records: 4</div>
<div class="a" style="left:912px;top:35px;width:486px;height:695px;background:#fff;box-shadow:-2px 0 5px rgba(40,20,40,0.27)"></div>
<div class="a" style="left:941.00px;top:62.35px;font-size:13.2px;line-height:14.744px;color:#444;transform:scaleX(1.0351);transform-origin:0 0;">Packing List Editor</div>
<div class="a" style="left:1068.00px;top:62.35px;font-size:13.2px;line-height:14.744px;color:#222;font-weight:bold;transform:scaleX(1.0287);transform-origin:0 0;">Packing List Items Editor</div>
<div class="a" style="left:912px;top:84px;width:486px;height:1px;background:#d0cccc;"></div>
<div class="a" style="left:1064.5px;top:82px;width:176.5px;height:3px;background:#246bf5;"></div>
<svg class="a" style="left:949px;top:99px" width="19" height="20" viewBox="0 0 19 20"><path d="M3.1 11.4 A6.5 6.5 0 1 0 9.3 3.8" fill="none" stroke="#5a5c63" stroke-width="2.1" stroke-linecap="round"/><path d="M5.9 3.6 L9.8 0.9 L9.8 6.3Z" fill="#5a5c63"/></svg>
<svg class="a" style="left:986px;top:100px" width="18" height="18" viewBox="0 0 18 18"><circle cx="9" cy="8.8" r="7.7" fill="none" stroke="#5a5c63" stroke-width="2.2"/><path d="M9 4.5 V13.1 M4.7 8.8 H13.3" stroke="#5a5c63" stroke-width="1.8"/></svg>
<svg class="a" style="left:1023px;top:100px" width="19" height="18" viewBox="0 0 19 18"><path d="M1.5 0 H14.5 L18.2 3.7 V16 Q18.2 17.4 16.8 17.4 H1.5 Q0 17.4 0 16 V1.5 Q0 0 1.5 0Z" fill="#5a5c63"/><rect x="3.5" y="1" width="10" height="5" fill="#fff"/><rect x="4.5" y="1" width="8.5" height="4.2" fill="#5a5c63"/><rect x="10.5" y="1.8" width="1.5" height="2.3" fill="#fff" opacity="0.6"/><rect x="3" y="10" width="12.2" height="7.4" fill="#fff"/><rect x="4" y="11" width="10.2" height="6.4" fill="#5a5c63"/></svg>
<svg class="a" style="left:1060px;top:99px" width="18" height="19" viewBox="0 0 18 19"><rect x="5" y="1" width="7" height="3" fill="none" stroke="#5a5c63" stroke-width="1.3"/><rect x="0.5" y="3.5" width="16" height="1.8" fill="#5a5c63"/><path d="M1.5 5.3 H15.5 V17 Q15.5 18.3 14.2 18.3 H2.8 Q1.5 18.3 1.5 17Z" fill="#5a5c63"/><rect x="4.6" y="7.3" width="1.3" height="8.5" fill="#fff"/><rect x="7.85" y="7.3" width="1.3" height="8.5" fill="#fff"/><rect x="11.1" y="7.3" width="1.3" height="8.5" fill="#fff"/></svg>
<div class="a" style="left:940.40px;top:137.38px;font-size:11.4px;line-height:12.734px;color:#333;transform:scaleX(0.9835);transform-origin:0 0;">Part Number:</div>
<div class="a" style="left:1009.80px;top:137.08px;font-size:11.4px;line-height:12.734px;color:#ff2a00;font-weight:bold;">*</div>
<div class="a" style="left:940px;top:154px;width:435px;height:21px;background:#eeeeee;border:1px solid #c9c2c2;border-radius:3px"></div>
<div class="a" style="left:944.40px;top:158.17px;font-size:11.3px;line-height:12.622px;color:#9a9a9a;transform:scaleX(0.9205);transform-origin:0 0;">ALI-1245</div>
<svg class="a" style="left:1360.5px;top:159.5px" width="11" height="11" viewBox="0 0 11 11"><rect x="0.8" y="0.8" width="9.4" height="9.4" rx="1.2" fill="none" stroke="#246bf5" stroke-width="1.4"/><path d="M3 8 L3.6 6.3 L7.6 2.3 L8.7 3.4 L4.7 7.4Z" fill="#246bf5"/></svg>
<div class="a" style="left:940.40px;top:185.28px;font-size:11.4px;line-height:12.734px;color:#333;transform:scaleX(0.9719);transform-origin:0 0;">Serial Number:</div>
<div class="a" style="left:940px;top:200px;width:435px;height:21px;background:#eeeeee;border:1px solid #c9c2c2;border-radius:3px"></div>
<div class="a" style="left:940.40px;top:230.08px;font-size:11.4px;line-height:12.734px;color:#333;transform:scaleX(1.0309);transform-origin:0 0;">Description:</div>
<div class="a" style="left:1005.20px;top:229.78px;font-size:11.4px;line-height:12.734px;color:#ff2a00;font-weight:bold;">*</div>
<div class="a" style="left:940px;top:246px;width:435px;height:35px;background:#fff;border:1px solid #c9c2c2;border-radius:3px"></div>
<div class="a" style="left:944.00px;top:251.28px;font-size:11.4px;line-height:12.734px;color:#2446c0;font-weight:bold;transform:scaleX(0.8893);transform-origin:0 0;">GROUNDING</div>
<div class="a" style="left:940.40px;top:289.88px;font-size:11.4px;line-height:12.734px;color:#333;">Tag/Batch Number:</div>
<div class="a" style="left:940px;top:305px;width:435px;height:21px;background:#eeeeee;border:1px solid #c9c2c2;border-radius:3px"></div>
<div class="a" style="left:944.00px;top:309.30px;font-size:11.6px;line-height:12.957px;color:#8c8c8c;transform:scaleX(0.9214);transform-origin:0 0;">00302T-2021</div>
<div class="a" style="left:940.00px;top:335.08px;font-size:11.4px;line-height:12.734px;color:#333;transform:scaleX(1.0308);transform-origin:0 0;">Quantity:</div>
<div class="a" style="left:989.80px;top:334.78px;font-size:11.4px;line-height:12.734px;color:#ff2a00;font-weight:bold;">*</div>
<div class="a" style="left:1100.90px;top:335.08px;font-size:11.4px;line-height:12.734px;color:#333;transform:scaleX(0.9722);transform-origin:0 0;">Currency:</div>
<div class="a" style="left:1151.70px;top:334.78px;font-size:11.4px;line-height:12.734px;color:#ff2a00;font-weight:bold;">*</div>
<div class="a" style="left:1271.40px;top:335.08px;font-size:11.4px;line-height:12.734px;color:#333;transform:scaleX(1.0247);transform-origin:0 0;">Unit:</div>
<div class="a" style="left:1298.20px;top:334.78px;font-size:11.4px;line-height:12.734px;color:#ff2a00;font-weight:bold;">*</div>
<div class="a" style="left:940px;top:352px;width:156px;height:22px;background:#fff;border:1px solid #c9c2c2;border-radius:3px"></div>
<div class="a" style="left:1101px;top:352px;width:164.5px;height:22px;background:#fff;border:1px solid #c9c2c2;border-radius:3px"></div>
<div class="a" style="left:1271px;top:352px;width:104px;height:22px;background:#fff;border:1px solid #c9c2c2;border-radius:3px"></div>
<div class="a" style="left:944.50px;top:356.50px;font-size:11.6px;line-height:12.957px;color:#2446c0;font-weight:bold;transform:scaleX(0.8678);transform-origin:0 0;">2</div>
<div class="a" style="left:1105.00px;top:356.50px;font-size:11.6px;line-height:12.957px;color:#2446c0;font-weight:bold;transform:scaleX(0.8985);transform-origin:0 0;">USD</div>
<div class="a" style="left:1275.50px;top:356.50px;font-size:11.6px;line-height:12.957px;color:#2446c0;font-weight:bold;transform:scaleX(0.8380);transform-origin:0 0;">EA</div>
<svg class="a" style="left:1254.5px;top:360px" width="8" height="5" viewBox="0 0 8 5"><path d="M0.8 0.8 L3.8 3.8 L6.8 0.8" fill="none" stroke="#3b74e6" stroke-width="1.2"/></svg>
<svg class="a" style="left:1363.0px;top:360px" width="8" height="5" viewBox="0 0 8 5"><path d="M0.8 0.8 L3.8 3.8 L6.8 0.8" fill="none" stroke="#3b74e6" stroke-width="1.2"/></svg>
<div class="a" style="left:1271.40px;top:382.98px;font-size:11.4px;line-height:12.734px;color:#333;transform:scaleX(0.9801);transform-origin:0 0;">Unit Price:</div>
<div class="a" style="left:1325.70px;top:382.68px;font-size:11.4px;line-height:12.734px;color:#ff2a00;font-weight:bold;">*</div>
<div class="a" style="left:1271px;top:398px;width:104px;height:21px;background:#fff;border:1px solid #c9c2c2;border-radius:3px"></div>
<div class="a" style="left:1275.00px;top:402.70px;font-size:11.6px;line-height:12.957px;color:#2446c0;font-weight:bold;transform:scaleX(0.9627);transform-origin:0 0;">1111</div>
<div class="a" style="left:940.00px;top:427.68px;font-size:11.4px;line-height:12.734px;color:#333;transform:scaleX(0.9823);transform-origin:0 0;">Aircraft/Order Reference:</div>
<div class="a" style="left:1067.80px;top:427.38px;font-size:11.4px;line-height:12.734px;color:#ff2a00;font-weight:bold;">*</div>
<div class="a" style="left:940px;top:445px;width:435px;height:21px;background:#fff;border:1px solid #c9c2c2;border-radius:3px"></div>
<div class="a" style="left:944.00px;top:449.50px;font-size:11.6px;line-height:12.957px;color:#2446c0;font-weight:bold;transform:scaleX(0.9298);transform-origin:0 0;">333</div>
<div class="a" style="left:940.00px;top:475.58px;font-size:11.4px;line-height:12.734px;color:#333;transform:scaleX(0.9234);transform-origin:0 0;">Remarks:</div>
<div class="a" style="left:940px;top:491px;width:435px;height:70px;background:#fff;border:1px solid #c9c2c2;border-radius:3px"></div>
<div class="a" style="left:0px;top:730px;width:1398px;height:1px;background:#b3b0b4;"></div>
<div class="a" style="left:0px;top:731px;width:1398px;height:19px;background:#848185;"></div>
<div class="a" style="left:0px;top:731px;width:1398px;height:1px;background:#7c797d;"></div>
<div class="a" style="left:0px;top:749px;width:1398px;height:1px;background:#7c797d;"></div>
<div class="a" style="left:17.70px;top:734.73px;font-size:9.8px;line-height:10.947px;color:#dedede;transform:scaleX(0.9185);transform-origin:0 0;">User: DEM</div>
<div class="a" style="left:77.80px;top:734.73px;font-size:9.8px;line-height:10.947px;color:#dedede;transform:scaleX(0.9112);transform-origin:0 0;">Permission: Full</div>
<div class="a" style="left:525px;top:310.5px;width:353px;height:131px;box-shadow:0 0 4px rgba(0,0,0,0.16);border-top:1.5px solid #e2e3e3;border-left:1px solid #eceded"></div>
<div class="a" style="left:526px;top:312px;width:351px;height:127.5px;background:#fff;border-left:1px solid #3a3d46;border-right:1px solid #555;border-bottom:1px solid #6e6e6e"></div>
<div class="a" style="left:526px;top:312px;width:351px;height:35.5px;background:#3a3d46;"></div>
<div class="a" style="left:534.20px;top:322.91px;font-size:14.8px;line-height:16.532px;color:#f0f0f0;transform:scaleX(0.8388);transform-origin:0 0;-webkit-text-stroke:0.4px #3a3d46">CONFIRM UPDATE</div>
<svg class="a" style="left:856.5px;top:326px" width="9.5" height="9.5" viewBox="0 0 9.5 9.5"><path d="M0.7 0.7 L8.8 8.8 M8.8 0.7 L0.7 8.8" stroke="#e6e6e6" stroke-width="1.5"/></svg>
<svg class="a" style="left:538px;top:359.5px" width="32" height="32" viewBox="0 0 32 32"><circle cx="15.7" cy="15.6" r="15.5" fill="#6a9ff5"/></svg>
<div class="a" style="left:547.50px;top:363.90px;font-size:20px;line-height:22.340px;color:#fff;font-weight:bold;-webkit-text-stroke:0.5px #fff">?</div>
<div class="a" style="left:579.00px;top:366.66px;font-size:11.2px;line-height:12.510px;color:#2a2a2a;transform:scaleX(0.9259);transform-origin:0 0;">Confirm Update Packing List Item?</div>
<div class="a" style="left:784.5px;top:403px;width:40.5px;height:28px;background:#246bf5;border-radius:4px;box-shadow:0 1px 2px rgba(0,0,0,0.35)"></div>
<div class="a" style="left:831.5px;top:403px;width:37.5px;height:28px;background:#246bf5;border-radius:4px;box-shadow:0 1px 2px rgba(0,0,0,0.35)"></div>
<div class="a" style="left:794.50px;top:412.61px;font-size:10.6px;line-height:11.840px;color:#fff;transform:scaleX(1.1284);transform-origin:0 0;">Yes</div>
<div class="a" style="left:843.30px;top:412.61px;font-size:10.6px;line-height:11.840px;color:#fff;transform:scaleX(1.0704);transform-origin:0 0;">No</div>
<svg class="a" style="left:0px;top:0px" width="1398" height="751" viewBox="0 0 1398 751"><path d="M812.4 421.1 L909.8 553.2 L938.5 524.7Z" fill="#0d93f7"/><circle cx="932.8" cy="548.7" r="23" fill="#fff" stroke="#1a1a1a" stroke-width="1"/><circle cx="932.8" cy="548.7" r="21.7" fill="#0d93f7"/></svg>
<div class="a" style="left:925.90px;top:538.54px;font-size:21.5px;line-height:24.015px;color:#fff;font-weight:bold;transform:scaleX(1.1043);transform-origin:0 0;">8</div>
</body></html>
